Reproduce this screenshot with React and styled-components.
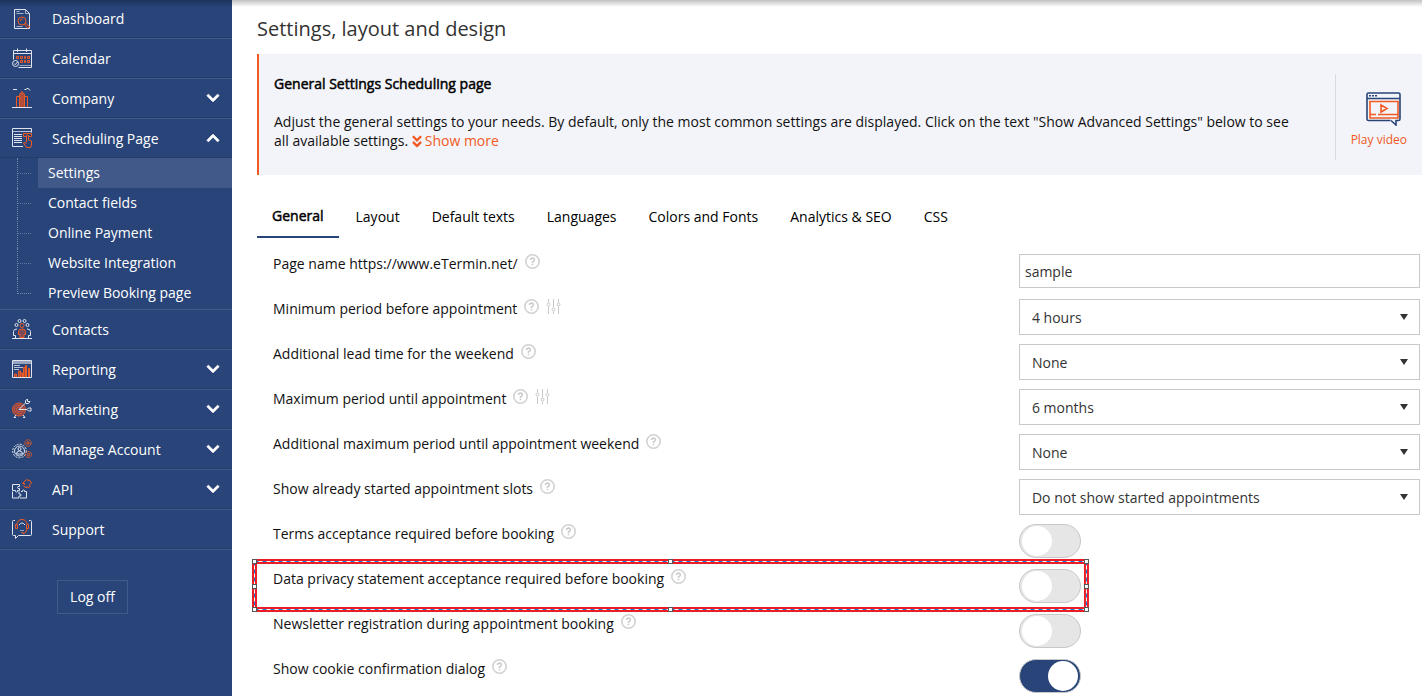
import { useState } from "react";
import styled, { createGlobalStyle } from "styled-components";
import {
  FaAngleDoubleDown,
  FaChevronDown,
  FaChevronUp,
} from "react-icons/fa";

const NAVY = "#284478";
const ORANGE = "#f15a22";
const RUST = "#a84d3c";

const GlobalStyle = createGlobalStyle`
  * {
    box-sizing: border-box;
  }

  body {
    margin: 0;
    background-color: #fff;
    color: #111;
    font-family: "Open Sans", "Noto Sans", sans-serif;
    font-size: 14px;
    line-height: 19px;
  }
`;

const Page = styled.div`
  display: flex;
  align-items: stretch;
  height: 100vh;
  overflow: hidden;
`;

const TopShadow = styled.div`
  position: fixed;
  top: 0;
  left: 0;
  right: 0;
  height: 7px;
  background: linear-gradient(rgba(0, 0, 0, 0.24), rgba(0, 0, 0, 0));
  pointer-events: none;
`;

/* sidebar */

const Sidebar = styled.nav`
  flex: 0 0 232px;
  background-color: ${NAVY};
  color: #fff;
`;

const Menu = styled.ul`
  list-style: none;
  margin: 0;
  padding: 0;
  border-bottom: 1px solid #405a89;
`;

const MenuItem = styled.li`
  & + & {
    border-top: 1px solid #405a89;
  }
`;

const MenuLink = styled.a`
  display: flex;
  align-items: center;
  height: 39px;
  padding: 0 12px;
  border-bottom: 1px solid #233b69;
  color: #fff;
  text-decoration: none;

  ${MenuItem}:first-child & {
    height: 38px;
  }

  svg:last-child:not(:first-child) {
    margin-left: auto;
    stroke: currentColor;
    stroke-width: 28;
  }
`;

const MenuText = styled.span`
  padding-left: 20px;
`;

const SubMenu = styled.ul`
  list-style: none;
  margin: 0;
  padding: 0 0 1px 17px;
`;

const SubItem = styled.li`
  display: flex;
  height: 30px;

  &::before {
    content: "";
    width: 13px;
    height: 15px;
    border-left: 1px dotted #7387ab;
    border-bottom: 1px dotted #7387ab;
  }

  &:not(:last-child)::before {
    height: 30px;
    border-bottom: 0;
    background: repeating-linear-gradient(
        to right,
        #5f75a0 0 1px,
        transparent 1px 2px
      )
      0 15px / 13px 1px no-repeat;
  }
`;

const SubLink = styled.a`
  flex: 1;
  margin-left: 7px;
  padding: 5px 10px;
  background-color: ${(props) => (props.$active ? "#405988" : "transparent")};
  color: #fff;
  text-decoration: none;
`;

const LogOff = styled.button`
  display: block;
  width: 71px;
  height: 34px;
  margin: 30px 0 0 57px;
  padding: 0 0 2px;
  border: 1px solid #405a89;
  background: none;
  color: #fff;
  font: inherit;
`;

/* content */

const Main = styled.main`
  flex: 1;
  min-width: 0;
  padding-left: 25px;
`;

const Title = styled.h1`
  margin: 0;
  padding: 15px 0 12px;
  color: #333;
  font-size: 20px;
  font-weight: 400;
  line-height: 27px;
`;

const Intro = styled.section`
  display: flex;
  padding: 20px 15px;
  border-left: 2px solid ${ORANGE};
  background-color: #f3f4f9;
`;

const IntroBody = styled.div`
  flex: 1;
  padding-right: 36px;
`;

const IntroTitle = styled.h2`
  margin: 0 0 19px;
  color: #000;
  font-size: 14px;
  font-weight: 400;
  line-height: 19px;
  -webkit-text-stroke: 0.035em #000;
`;

const IntroText = styled.p`
  margin: 0;
`;

const OrangeLink = styled.a`
  color: ${ORANGE};
  text-decoration: none;

  svg {
    width: 10px;
    height: 15px;
    margin-right: 3px;
    vertical-align: -3px;
  }
`;

const Video = styled.a`
  display: flex;
  flex-direction: column;
  align-items: center;
  gap: 5px;
  height: 86px;
  margin-bottom: -5px;
  padding: 18px 0 0 15px;
  border-left: 1px solid #d9dbe0;
  color: ${ORANGE};
  font-size: 12px;
  line-height: 17px;
  text-decoration: none;

  svg {
    margin-left: 10px;
  }
`;

const Tabs = styled.div`
  display: flex;
  gap: 2px;
  padding-top: 23px;
`;

const Tab = styled.button`
  height: 40px;
  padding: 0 15px ${(props) => (props.$active ? "4px" : "2px")};
  border: 0;
  border-bottom: 2px solid ${(props) => (props.$active ? NAVY : "transparent")};
  background: none;
  color: #000;
  font: inherit;
  -webkit-text-stroke: ${(props) => (props.$active ? "0.035em #000" : "0")};
`;

const Form = styled.form`
  padding: 16px 2px 0 0;
`;

const Row = styled.div`
  position: relative;
  display: grid;
  grid-template-columns: minmax(0, 1.9fr) minmax(0, 1fr);
  align-items: start;
  height: 45px;
`;

const LabelCell = styled.div`
  display: flex;
  align-items: flex-start;
  gap: 7px;
  padding-left: 16px;
`;

const Input = styled.input`
  width: 100%;
  height: 34px;
  padding: 0 5px;
  border: 1px solid #c8c8c8;
  border-radius: 0;
  background-color: #fff;
  color: #333;
  font: inherit;
`;

const SelectBox = styled.div`
  display: grid;
  align-items: center;

  &::after {
    content: "";
    grid-area: 1 / 1;
    justify-self: end;
    margin-right: 12px;
    border: 4px solid transparent;
    border-top: 6px solid #333;
    border-bottom: 0;
    pointer-events: none;
  }
`;

const Select = styled.select`
  grid-area: 1 / 1;
  appearance: none;
  width: 100%;
  height: 36px;
  padding: 0 12px;
  border: 1px solid #c8c8c8;
  border-radius: 0;
  background-color: #fff;
  color: #333;
  font: inherit;
`;

const Toggle = styled.input`
  appearance: none;
  display: flex;
  align-items: center;
  width: 62px;
  height: 34px;
  margin: 0;
  padding: 0 2px;
  border: 1px solid #c8c8c8;
  border-radius: 17px;
  background-color: #e6e6e6;

  &::before {
    content: "";
    width: 30px;
    height: 30px;
    border-radius: 50%;
    background-color: #fff;
  }

  &:checked {
    justify-content: flex-end;
    background-color: ${NAVY};
  }
`;

/* selection frame that lies over the highlighted row */
const Frame = styled.svg`
  position: absolute;
  top: -8px;
  left: -3px;
  width: calc(100% * 1.9 / 2.9 + 70px);
  height: 48px;
  overflow: visible;
  pointer-events: none;
`;

const MenuSvg = ({ children }) => (
  <svg
    width="20"
    height="20"
    viewBox="0 0 20 20"
    fill="none"
    stroke="#dfe4ee"
    strokeWidth="1"
    aria-hidden="true"
  >
    {children}
  </svg>
);

const icons = {
  dashboard: (
    <MenuSvg>
      <path d="M2.5.5h11l4 4v15h-15z" />
      <path d="M13.5.5v4h4M4.5 2.5h3M4.5 4.5h7M4.5 17.5h6" strokeOpacity=".7" />
      <g stroke={ORANGE}>
        <circle cx="10" cy="12" r="4" />
        <path d="M8.5 12a2 2 0 0 1 2-2M12.5 15.5l3 3.5 2-1.5-3.5-3z" />
      </g>
    </MenuSvg>
  ),
  calendar: (
    <MenuSvg>
      <path d="M1.5 11.5V2.5h18v17H6.5M1.5 5.5h18M5.5.5v3.500M14.5.5v3.500" />
      <path d="M7.5 17.5h12" strokeOpacity=".6" />
      <circle cx="3.5" cy="15.5" r="3" />
      <path d="M2 15.5l1.200 1.200 2.300-2.700" />
      <g stroke={ORANGE}>
        <path d="M4.500 8.500h2v2h-2zM8.500 8.500h2v2h-2zM12.500 8.500h1v2h-1zM15.500 8.500h2v2h-2z" />
        <path d="M8.500 12.500h2v2h-2zM12.500 12.500h1v2h-1zM15.500 12.500h2v2h-2z" />
      </g>
    </MenuSvg>
  ),
  company: (
    <MenuSvg>
      <path d="M0 19.500h20M1 1.500h4M12.500 1.500h2M14.500.5h2l1.500 2" />
      <g stroke={ORANGE}>
        <path d="M4.500 19V8.500h3M15.500 19V8.500h-3" />
        <path d="M7.500 19V6.500l1-1.500h3l1 1.500V19M10 3v2" fill={RUST} />
        <path d="M10 8v11" strokeOpacity=".5" />
      </g>
    </MenuSvg>
  ),
  scheduling: (
    <MenuSvg>
      <path d="M11 18.500H.5V.5h19v4" />
      <path d="M.5 3.500h19" strokeOpacity=".8" />
      <path d="M2 6.500h8M2 8.500h8M2 10.500h8M2 12.500h8M2 14.500h8" />
      <path
        stroke={ORANGE}
        d="M14 8.500h-2.500v-3h8v3H17M14.500 14V8a1 1 0 0 1 2 0v4l3 1v4l-1 2.500h-4L11.500 15q1-1.500 3 .5"
      />
    </MenuSvg>
  ),
  contacts: (
    <MenuSvg>
      <path d="M0 19.500h20" />
      <circle cx="7.500" cy="2" r="1.500" />
      <circle cx="12.500" cy="2" r="1.500" />
      <circle cx="4.500" cy="6" r="1.500" />
      <circle cx="15.500" cy="6" r="1.500" />
      <path d="M3.500 19v-2.500h-2v-4q0-2.500 3.500-2.500M16.500 19v-2.500h2v-4q0-2.500-3.500-2.500" />
      <g stroke={ORANGE}>
        <circle cx="10" cy="6.500" r="2" />
        <path
          d="M6.500 15.500v-3q0-2.500 3.500-2.500t3.500 2.500v3H12v3H8v-3z"
          fill="#7a4a58"
        />
      </g>
    </MenuSvg>
  ),
  reporting: (
    <MenuSvg>
      <path d="M.5 1.500h19v17H.5z" />
      <path d="M1 3.500h18" strokeWidth="3" strokeOpacity=".6" />
      <path d="M2 6.500h6M2 8.500h9M2 10.500h5" strokeOpacity=".8" />
      <path
        stroke={ORANGE}
        fill={RUST}
        d="M2.500 18v-3h2v3M6.500 18v-6h2v6M8.500 18v-4h2v4M11.500 18V8.500h2V18M13.500 18V6.500h1V18M16.500 18V9.500h1V18"
      />
    </MenuSvg>
  ),
  marketing: (
    <MenuSvg>
      <g stroke={ORANGE} fill="#6b4763">
        <circle cx="7" cy="10.500" r="6.500" />
        <circle cx="7" cy="10.500" r="4.500" />
        <circle cx="7" cy="10.500" r="2.500" />
      </g>
      <path d="M7 10.500l6.500-6.500V1.500l2-1.500v2.500H18l-1.500 2h-2.500M7 10.500h8l1.500-1.500h2.500v3h-2.500L15 10.500M4 16l-2 2.500h2M11 16l2 2.500h-2" />
    </MenuSvg>
  ),
  account: (
    <MenuSvg>
      <circle cx="7.500" cy="12" r="6.800" strokeDasharray="2 1.200" />
      <circle cx="7.500" cy="12" r="5" />
      <circle cx="7.500" cy="10" r="1.500" />
      <path d="M4.500 15q0-3 3-3t3 3z" />
      <g stroke={ORANGE}>
        <circle cx="16" cy="4" r="3.200" strokeDasharray="2 .6" />
        <circle cx="16" cy="4" r="1.200" />
        <circle cx="16.500" cy="15.500" r="3" strokeDasharray="2 .6" />
        <circle cx="16.500" cy="15.500" r="1.200" />
      </g>
    </MenuSvg>
  ),
  api: (
    <MenuSvg>
      <path d="M.5 5.500h7v2q-2-.5-2 1t2 1v2h-2q.5 1.500-1 1.500t-1-1.500h-3z" />
      <path d="M.5 12.500v6.500h6.500v-2q2 .5 2-1t-2-1v-2.500" />
      <path d="M9 12.500h1.500q-.5-1.500 1-1.500t1 1.500h2v6.500H8" />
      <path
        stroke={ORANGE}
        d="M10.500 4.500l4-4 1.500 1q1.500-1.500 2 .5l1.500 2-2 2q1 2-.5 2.500t-2-1l-1 1.500-2.500-2.500q1.500-1 1-2z"
      />
    </MenuSvg>
  ),
  support: (
    <MenuSvg>
      <path d="M3 1.500H1.500q-1 0-1 1v13q0 1 1 1h2v3l3-3h12q1 0 1-1v-13q0-1-1-1H17M7 6q3-4 6 0" />
      <g stroke={ORANGE}>
        <path d="M4.500 6q1-5.500 5.500-5.500T15.500 6" />
        <path d="M4.500 5.500h-1v4h2v-4M15.500 5.500h1v4h-2v-4M15 10q-.5 4-4 5v-1.500H9.500" />
        <path d="M8 11.500h4" stroke="#8f9fbe" />
      </g>
    </MenuSvg>
  ),
};

const HelpIcon = () => (
  <svg width="15" height="15" viewBox="0 0 15 15" role="img" aria-label="Help">
    <circle cx="7.500" cy="7.500" r="6.700" fill="#fff" stroke="#d2d2d2" strokeWidth="1.600" />
    <path
      d="M5.600 6q.1-1.900 1.900-1.900T9.400 5.700q0 1-1.900 2.200V9M7.500 9.800v1.400"
      fill="none"
      stroke="#cccccc"
      strokeWidth="1.600"
    />
  </svg>
);

const SlidersIcon = () => (
  <svg
    width="15"
    height="15"
    viewBox="0 0 15 15"
    fill="none"
    stroke="#c8c8c8"
    role="img"
    aria-label="Advanced setting"
  >
    <path d="M2.500 0v3.500M2.500 7.500V15M7.500 0v8.500M7.500 12.500V15M12.500 0v3.500M12.500 7.500V15" />
    <circle cx="2.500" cy="5.500" r="1.500" />
    <circle cx="7.500" cy="10.500" r="1.500" />
    <circle cx="12.500" cy="5.500" r="1.500" />
  </svg>
);

const VideoIcon = () => (
  <svg width="35" height="34" viewBox="0 0 35 34" fill="none" aria-hidden="true">
    <path
      d="M24.500 28.500H2.500q-1.500 0-1.500-1.500V2.500Q1 1 2.500 1h30Q34 1 34 2.500v24.500q0 1.500-1.500 1.500h-2.500V33l-5-4.500M1 6.500h33"
      stroke={NAVY}
      strokeWidth="1.600"
    />
    <path d="M3 3.800h8" stroke={NAVY} strokeWidth="1.400" strokeDasharray="2 1" />
    <path
      d="M4 9.500h28v16.500H4zM4 22.500h6M12 22.500h20M15 13l6 3.500-6 3.500z"
      stroke={ORANGE}
      strokeWidth="1.600"
    />
  </svg>
);

const FrameLines = (props) => (
  <g {...props}>
    <line x1="0" y1="0" x2="100%" y2="0" />
    <line x1="0" y1="48" x2="100%" y2="48" />
    <line x1="0" y1="0" x2="0" y2="48" />
    <line x1="100%" y1="0" x2="100%" y2="48" />
  </g>
);

const Handle = ({ x, y }) => (
  <rect
    x={x}
    y={y}
    width="4"
    height="4"
    transform="translate(-2 -2)"
    fill="#fff"
    stroke="#555"
  />
);

const Selection = () => (
  <Frame aria-hidden="true">
    <g transform="translate(.5 .5)">
      <FrameLines stroke="#ed1c24" strokeWidth="5" strokeLinecap="square" />
      <FrameLines stroke="#fff" />
      <FrameLines stroke="#0f78d4" strokeDasharray="4 4" />
      <Handle x="0" y="0" />
      <Handle x="50%" y="0" />
      <Handle x="100%" y="0" />
      <Handle x="0" y="25" />
      <Handle x="100%" y="25" />
      <Handle x="0" y="48" />
      <Handle x="50%" y="48" />
      <Handle x="100%" y="48" />
    </g>
  </Frame>
);

const menu = [
  { icon: "dashboard", text: "Dashboard" },
  { icon: "calendar", text: "Calendar" },
  { icon: "company", text: "Company", arrow: true },
  {
    icon: "scheduling",
    text: "Scheduling Page",
    arrow: true,
    children: [
      "Settings",
      "Contact fields",
      "Online Payment",
      "Website Integration",
      "Preview Booking page",
    ],
  },
  { icon: "contacts", text: "Contacts" },
  { icon: "reporting", text: "Reporting", arrow: true },
  { icon: "marketing", text: "Marketing", arrow: true },
  { icon: "account", text: "Manage Account", arrow: true },
  { icon: "api", text: "API", arrow: true },
  { icon: "support", text: "Support" },
];

const tabs = [
  "General",
  "Layout",
  "Default texts",
  "Languages",
  "Colors and Fonts",
  "Analytics & SEO",
  "CSS",
];

const fields = [
  { id: "page", label: "Page name https://www.eTermin.net/", type: "text", value: "sample" },
  { id: "min", label: "Minimum period before appointment", type: "select", value: "4 hours", advanced: true },
  { id: "lead", label: "Additional lead time for the weekend", type: "select", value: "None" },
  { id: "max", label: "Maximum period until appointment", type: "select", value: "6 months", advanced: true },
  { id: "maxweekend", label: "Additional maximum period until appointment weekend", type: "select", value: "None" },
  { id: "started", label: "Show already started appointment slots", type: "select", value: "Do not show started appointments" },
  { id: "terms", label: "Terms acceptance required before booking", type: "toggle" },
  { id: "privacy", label: "Data privacy statement acceptance required before booking", type: "toggle", selected: true },
  { id: "newsletter", label: "Newsletter registration during appointment booking", type: "toggle" },
  { id: "cookie", label: "Show cookie confirmation dialog", type: "toggle", on: true },
];

const Control = ({ field }) => {
  if (field.type === "text") {
    return <Input id={field.id} type="text" defaultValue={field.value} />;
  }
  if (field.type === "select") {
    return (
      <SelectBox>
        <Select id={field.id}>
          <option>{field.value}</option>
        </Select>
      </SelectBox>
    );
  }
  return <Toggle id={field.id} type="checkbox" defaultChecked={field.on} />;
};

const App = () => {
  const [tab, setTab] = useState("General");

  return (
    <Page>
      <GlobalStyle />
      <Sidebar>
        <Menu>
          {menu.map((item) => (
            <MenuItem key={item.text}>
              <MenuLink href="#">
                {icons[item.icon]}
                <MenuText>{item.text}</MenuText>
                {item.arrow &&
                  (item.children ? <FaChevronUp size={14} /> : <FaChevronDown size={14} />)}
              </MenuLink>
              {item.children && (
                <SubMenu>
                  {item.children.map((child, i) => (
                    <SubItem key={child}>
                      <SubLink href="#" $active={i === 0}>
                        {child}
                      </SubLink>
                    </SubItem>
                  ))}
                </SubMenu>
              )}
            </MenuItem>
          ))}
        </Menu>
        <LogOff type="button">Log off</LogOff>
      </Sidebar>
      <Main>
        <Title>Settings, layout and design</Title>
        <Intro>
          <IntroBody>
            <IntroTitle>General Settings Scheduling page</IntroTitle>
            <IntroText>
              Adjust the general settings to your needs. By default, only the
              most common settings are displayed. Click on the text "Show
              Advanced Settings" below to see all available settings.{" "}
              <OrangeLink href="#">
                <FaAngleDoubleDown />
                Show more
              </OrangeLink>
            </IntroText>
          </IntroBody>
          <Video href="#">
            <VideoIcon />
            Play video
          </Video>
        </Intro>
        <Tabs role="tablist">
          {tabs.map((name) => (
            <Tab
              key={name}
              type="button"
              role="tab"
              aria-selected={tab === name}
              $active={tab === name}
              onClick={() => setTab(name)}
            >
              {name}
            </Tab>
          ))}
        </Tabs>
        <Form>
          {fields.map((field) => (
            <Row key={field.id}>
              <LabelCell>
                <label htmlFor={field.id}>{field.label}</label>
                <HelpIcon />
                {field.advanced && <SlidersIcon />}
              </LabelCell>
              <Control field={field} />
              {field.selected && <Selection />}
            </Row>
          ))}
        </Form>
      </Main>
      <TopShadow />
    </Page>
  );
};

export default App;
